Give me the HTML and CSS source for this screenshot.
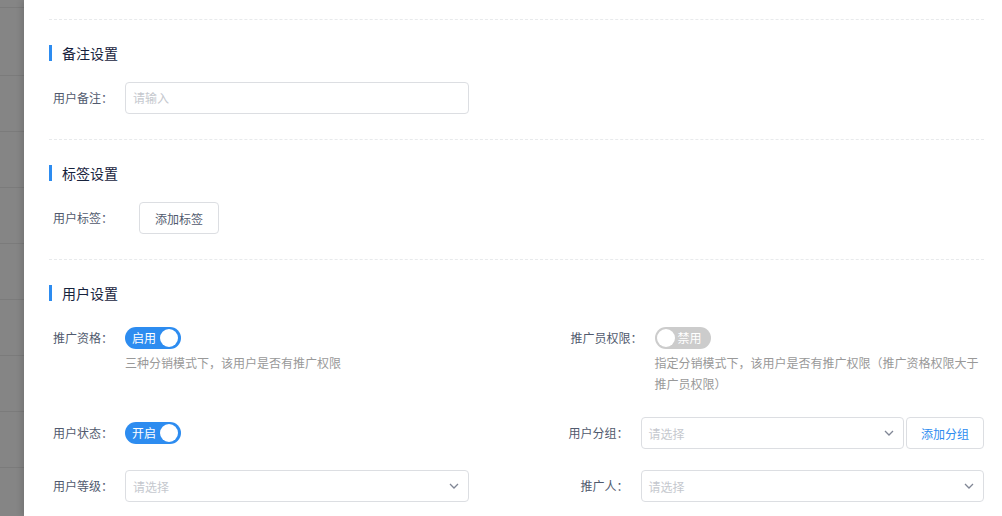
FILE: index.html
```html
<!DOCTYPE html>
<html lang="zh-CN">
<head>
  <meta charset="UTF-8" />
  <meta name="viewport" content="width=device-width, initial-scale=1.0"/>
  <title>用户详情</title>
  <link rel="stylesheet" href="styles.css">
</head>
<body>

  <div class="mask"></div>

  <div class="drawer">
    <div class="section-tail"></div>

    <!-- 备注设置 -->
    <div class="section">
      <h4 class="section-title">备注设置</h4>
      <div class="form-row">
        <div class="form-item">
          <label class="form-label">用户备注：</label>
          <div class="form-control">
            <div class="input"><span class="placeholder">请输入</span></div>
          </div>
        </div>
      </div>
    </div>

    <!-- 标签设置 -->
    <div class="section">
      <h4 class="section-title">标签设置</h4>
      <div class="form-row">
        <div class="form-item">
          <label class="form-label">用户标签：</label>
          <div class="form-control">
            <button class="btn btn-tag">添加标签</button>
          </div>
        </div>
      </div>
    </div>

    <!-- 用户设置 -->
    <div class="section section-last">
      <h4 class="section-title">用户设置</h4>

      <div class="form-row row-first">
        <div class="form-item">
          <label class="form-label">推广资格：</label>
          <div class="form-control">
            <span class="switch switch-on"><span class="switch-inner">启用</span></span>
            <div class="form-tip">三种分销模式下，该用户是否有推广权限</div>
          </div>
        </div>
        <div class="form-item">
          <label class="form-label label-wide">推广员权限：</label>
          <div class="form-control">
            <span class="switch"><span class="switch-inner">禁用</span></span>
            <div class="form-tip">指定分销模式下，该用户是否有推广权限（推广资格权限大于推广员权限）</div>
          </div>
        </div>
      </div>

      <div class="form-row row-second">
        <div class="form-item">
          <label class="form-label">用户状态：</label>
          <div class="form-control">
            <span class="switch switch-on"><span class="switch-inner">开启</span></span>
          </div>
        </div>
        <div class="form-item">
          <label class="form-label">用户分组：</label>
          <div class="form-control control-group">
            <div class="select">
              <span class="placeholder">请选择</span>
              <svg class="select-arrow" width="10" height="6" viewBox="0 0 10 6"><polyline points="1,1 5,5 9,1" fill="none" stroke="#808695" stroke-width="1.3"/></svg>
            </div>
            <button class="btn btn-group">添加分组</button>
          </div>
        </div>
      </div>

      <div class="form-row">
        <div class="form-item">
          <label class="form-label">用户等级：</label>
          <div class="form-control">
            <div class="select">
              <span class="placeholder">请选择</span>
              <svg class="select-arrow" width="10" height="6" viewBox="0 0 10 6"><polyline points="1,1 5,5 9,1" fill="none" stroke="#808695" stroke-width="1.3"/></svg>
            </div>
          </div>
        </div>
        <div class="form-item">
          <label class="form-label">推广人：</label>
          <div class="form-control">
            <div class="select">
              <span class="placeholder">请选择</span>
              <svg class="select-arrow" width="10" height="6" viewBox="0 0 10 6"><polyline points="1,1 5,5 9,1" fill="none" stroke="#808695" stroke-width="1.3"/></svg>
            </div>
          </div>
        </div>
      </div>
    </div>
  </div>

</body>
</html>
```

FILE: styles.css
```css
* {
  box-sizing: border-box;
  margin: 0;
  padding: 0;
}

body {
  font-family: "Noto Sans CJK SC", "Noto Sans", sans-serif;
  font-size: 12px;
  color: #515a6e;
  height: 516px;
  overflow: hidden;
  display: flex;
}

.mask {
  width: 24px;
  flex-shrink: 0;
  background: repeating-linear-gradient(to bottom, #858585 0 55px, #7b7b7b 55px 56px);
  background-position: 0 20px;
}

.drawer {
  flex: 1;
  background: #fff;
  padding: 0 18px 0 25px;
  box-shadow: -2px 0 6px rgba(0,0,0,0.15);
  position: relative;
}

.section-tail {
  height: 20px;
  border-bottom: 1px dashed #e8eaec;
}

.section {
  padding: 23px 0 25px;
  border-bottom: 1px dashed #e8eaec;
}

.section-last {
  border-bottom: none;
}

.section-title {
  display: flex;
  align-items: center;
  height: 19px;
  font-size: 14px;
  font-weight: normal;
  color: #17233d;
  margin-bottom: 20px;
}

.section-title::before {
  content: "";
  width: 3px;
  height: 16px;
  background: #2d8cf0;
  margin-right: 10px;
}

.form-row {
  display: grid;
  grid-template-columns: 1fr 1fr;
  column-gap: 96px;
  align-items: start;
}

.row-first {
  margin-bottom: 23px;
}

.row-second {
  margin-bottom: 21px;
}

.form-item {
  display: flex;
  align-items: flex-start;
}

.form-label {
  width: 76px;
  flex-shrink: 0;
  padding-right: 12px;
  text-align: right;
  line-height: 32px;
  color: #515a6e;
}

.label-wide {
  width: 90px;
}

.form-control {
  flex: 1;
  min-width: 0;
}

.control-group {
  display: flex;
}

.placeholder {
  color: #c5c8ce;
}

.input {
  height: 32px;
  line-height: 30px;
  padding: 0 7px;
  border: 1px solid #dcdee2;
  border-radius: 4px;
  background: #fff;
}

.select {
  flex: 1;
  height: 32px;
  padding: 0 9px 0 7px;
  border: 1px solid #dcdee2;
  border-radius: 4px;
  display: flex;
  align-items: center;
  justify-content: space-between;
}

.btn {
  height: 32px;
  font-family: inherit;
  font-size: 12px;
  background: #fff;
  border: 1px solid #dcdee2;
  border-radius: 4px;
  color: #515a6e;
  cursor: pointer;
}

.btn-tag {
  width: 80px;
  margin-left: 14px;
}

.btn-group {
  width: 78px;
  margin-left: 2px;
  color: #2d8cf0;
}

.switch {
  display: block;
  position: relative;
  width: 56px;
  height: 22px;
  margin: 5px 0 3px;
  border-radius: 22px;
  background: #ccc;
  color: #fff;
  line-height: 22px;
}

.switch::after {
  content: "";
  position: absolute;
  top: 2px;
  left: 2px;
  width: 18px;
  height: 18px;
  border-radius: 50%;
  background: #fff;
}

.switch-inner {
  position: absolute;
  left: 23px;
  top: 0;
}

.switch-on {
  background: #2d8cf0;
}

.switch-on::after {
  left: 35px;
}

.switch-on .switch-inner {
  left: 7px;
}

.form-tip {
  line-height: 21px;
  color: #999;
}
```
